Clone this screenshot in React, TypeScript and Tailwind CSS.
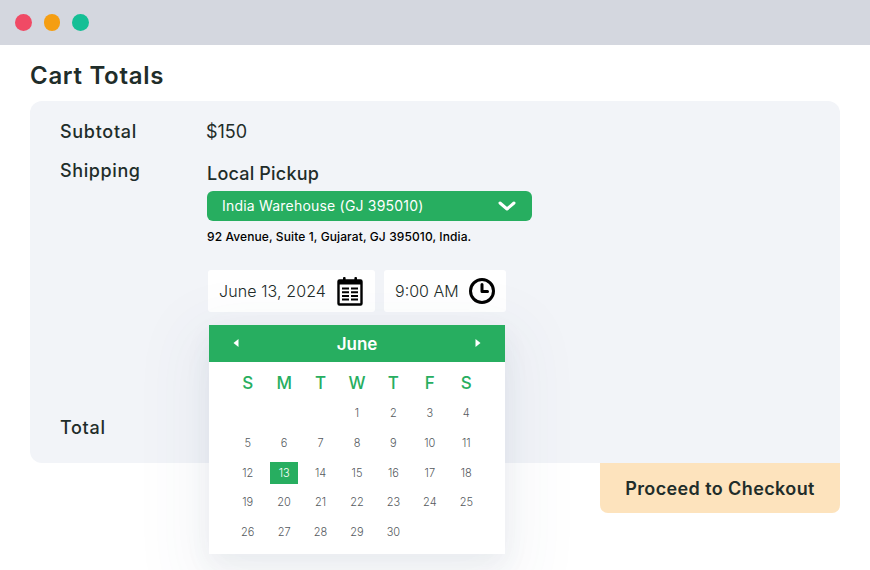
const weeks = [
  ["", "", "", "1", "2", "3", "4"],
  ["5", "6", "7", "8", "9", "10", "11"],
  ["12", "13", "14", "15", "16", "17", "18"],
  ["19", "20", "21", "22", "23", "24", "25"],
  ["26", "27", "28", "29", "30", "", ""],
];

const weekdays = ["S", "M", "T", "W", "T", "F", "S"];

function CalendarIcon() {
  return (
    <svg width="26" height="29" viewBox="0 0 26 29" fill="none">
      <rect x="1.5" y="3.5" width="23" height="24" rx="1" stroke="#000" strokeWidth="2.4" />
      <rect x="1" y="3" width="24" height="4.5" fill="#000" />
      <rect x="6" y="0" width="2.6" height="5" rx="1" fill="#000" />
      <rect x="17.4" y="0" width="2.6" height="5" rx="1" fill="#000" />
      <path d="M5 11.5h7M14 11.5h7M5 15.2h7M14 15.2h7M5 18.9h7M14 18.9h7M5 22.6h7M14 22.6h7" stroke="#000" strokeWidth="2" />
    </svg>
  );
}

function ClockIcon() {
  return (
    <svg width="26" height="26" viewBox="0 0 26 26" fill="none">
      <circle cx="13" cy="13" r="11.5" stroke="#000" strokeWidth="3" />
      <path d="M13 6.5v7h5.5" stroke="#000" strokeWidth="3" strokeLinecap="round" strokeLinejoin="round" />
    </svg>
  );
}

function Calendar() {
  return (
    <div className="absolute left-[2px] top-[55px] w-[296px] h-[229px] bg-white shadow-[0_20px_60px_20px_rgba(60,80,120,0.05),0_10px_24px_rgba(60,80,120,0.07)]">
      <div className="relative flex h-[37px] items-center justify-center bg-[#27ae60] pt-[2px] text-[17px] font-semibold text-white">
        June
        <svg className="absolute left-[24px] top-[14px]" width="6" height="8" viewBox="0 0 6 8">
          <path d="M5.5 0v8L0.5 4z" fill="#fff" />
        </svg>
        <svg className="absolute right-[24px] top-[14px]" width="6" height="8" viewBox="0 0 6 8">
          <path d="M0.5 0v8l5-4z" fill="#fff" />
        </svg>
      </div>
      <div className="ml-[20.5px] mr-[20.5px] grid grid-cols-7 text-center">
        {weekdays.map((d, i) => (
          <div key={i} className="flex h-[36.4px] items-center justify-center pt-[8px] text-[17px] font-medium text-[#27ae60]">
            {d}
          </div>
        ))}
        {weeks.flat().map((d, i) => (
          <div key={i} className="flex h-[29.8px] items-center justify-center text-[11px] font-light text-[#555a5e]">
            {d === "13" ? (
              <span className="flex h-[22px] w-[28px] items-center justify-center bg-[#27ae60] text-white">13</span>
            ) : (
              d
            )}
          </div>
        ))}
      </div>
    </div>
  );
}

function App() {
  return (
    <div className="h-[570px] w-[870px] overflow-hidden bg-white font-['Inter',sans-serif] text-[#1f2d2a]">
      <div className="flex h-[45px] items-center gap-[12px] bg-[#d4d7df] pl-[15px]">
        <div className="h-[16.5px] w-[16.5px] rounded-full bg-[#f04a65]" />
        <div className="h-[16.5px] w-[16.5px] rounded-full bg-[#f59e12]" />
        <div className="h-[16.5px] w-[16.5px] rounded-full bg-[#14bf95]" />
      </div>

      <div className="px-[30px]">
        <h1 className="flex h-[56px] items-center pt-[6px] text-[24px] font-semibold tracking-[0.7px]">Cart Totals</h1>

        <div className="flex h-[362px] flex-col rounded-t-[12px] rounded-bl-[12px] rounded-br-none bg-[#f2f4f8] pl-[30px] pt-[18px]">
          <div className="flex h-[24px] items-center text-[18px]">
            <div className="w-[146px] font-[450] tracking-[0.7px]">Subtotal</div>
            <div>$150</div>
          </div>

          <div className="mt-[16px] flex">
            <div className="w-[147px] text-[18px] font-[450] leading-[24px] tracking-[0.6px]">Shipping</div>
            <div className="relative">
              <div className="mt-[3px] text-[18px] font-[450] leading-[24px] tracking-[0.2px]">Local Pickup</div>
              <div className="mt-[5px] flex h-[30px] w-[325px] items-center justify-between rounded-[6px] bg-[#27ae60] pb-[1px] pl-[15px] pr-[16px] text-[14px] tracking-[0.2px] text-white">
                India Warehouse (GJ 395010)
                <svg width="18" height="10" viewBox="0 0 18 10" fill="none">
                  <path d="M2 2l7 6 7-6" stroke="#fff" strokeWidth="3" strokeLinecap="round" strokeLinejoin="round" />
                </svg>
              </div>
              <div className="mt-[7px] text-[12px] font-medium leading-[18px] tracking-[0.1px] text-black">
                92 Avenue, Suite 1, Gujarat, GJ 395010, India.
              </div>
              <div className="relative mt-[24px] flex gap-[9px]">
                <div className="ml-px flex h-[42px] w-[167px] items-center justify-between rounded-[3px] bg-white pl-[11px] pr-[12px] text-[16px] font-light tracking-[0.1px] text-[#222b29]">
                  June 13, 2024
                  <CalendarIcon />
                </div>
                <div className="flex h-[42px] w-[122px] items-center justify-between rounded-[3px] bg-white pl-[11px] pr-[11px] text-[16px] font-light text-[#222b29]">
                  9:00 AM
                  <ClockIcon />
                </div>
                <Calendar />
              </div>
            </div>
          </div>

          <div className="mt-[104px] text-[18px] font-[450] leading-[24px] tracking-[0.7px]">Total</div>
        </div>

        <div className="flex justify-end">
          <div className="flex h-[50px] w-[240px] items-center justify-center rounded-b-[8px] bg-[#fde3bd] text-[18px] font-semibold tracking-[0.4px]">
            Proceed to Checkout
          </div>
        </div>
      </div>
    </div>
  );
}

export default App;
